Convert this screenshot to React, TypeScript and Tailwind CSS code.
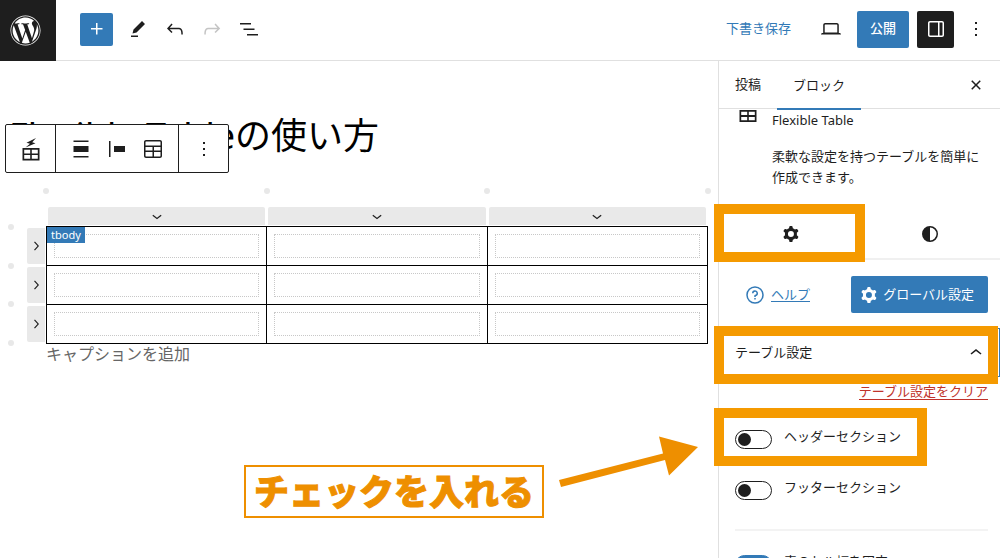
import { useState } from "react";
import type { ReactNode } from "react";
import { FaWordpress } from "react-icons/fa";

const ICONS = {
  plus: "M11 12.5V17.5H12.5V12.5H17.5V11H12.5V6H11V11H6V12.5H11Z",
  edit: "m19 7-3-3-8.5 8.5-1 4 4-1L19 7Zm-7 11.5H5V20h7v-1.5Z",
  undo: "M18.3 11.7c-.6-.6-1.4-.9-2.3-.9H6.7l2.9-3.3-1.1-1-4.5 5L8.5 16l1-1-2.7-2.7H16c.5 0 .9.2 1.3.5 1 1 1 3.4 1 4.5v.3h1.5v-.2c0-1.5 0-4.3-1.5-5.7z",
  redo: "M15.6 6.5l-1.1 1 2.9 3.3H8c-.9 0-1.7.3-2.3.9-1.4 1.5-1.4 4.2-1.4 5.6v.2h1.5v-.3c0-1.1 0-3.5 1-4.5.3-.3.7-.5 1.3-.5h9.2L14.5 15l1.1 1.1 4.6-4.6-4.6-5z",
  list: "M3 6h11v1.5H3V6Zm3.5 5.5h11V13h-11v-1.5ZM21 17H10v1.5h11V17Z",
  desktop: "M20.5 16h-.7V8c0-1.1-.9-2-2-2H6.2c-1.1 0-2 .9-2 2v8h-.7c-.8 0-1.5.7-1.5 1.5h20c0-.8-.7-1.5-1.5-1.5zM5.7 8c0-.3.2-.5.5-.5h11.6c.3 0 .5.2.5.5v7.6H5.7V8z",
  drawer: "M18 4H6c-1.1 0-2 .9-2 2v12c0 1.1.9 2 2 2h12c1.1 0 2-.9 2-2V6c0-1.1-.9-2-2-2zm-4 14.5H6c-.3 0-.5-.2-.5-.5V6c0-.3.2-.5.5-.5h8v13zm4.5-.5c0 .3-.2.5-.5.5h-2.5v-13H18c.3 0 .5.2.5.5v12z",
  more: "M13 19h-2v-2h2v2zm0-6h-2v-2h2v2zm0-6h-2V5h2v2z",
  close: "M12 13.06l3.712 3.713 1.061-1.06L13.061 12l3.712-3.712-1.06-1.06L12 10.938 8.288 7.227l-1.061 1.06L10.939 12l-3.712 3.712 1.06 1.061L12 13.061z",
  cog: "M10.289 4.836A1 1 0 0111.275 4h1.306a1 1 0 01.987.836l.244 1.466c.787.26 1.503.679 2.108 1.218l1.393-.522a1 1 0 011.216.437l.653 1.13a1 1 0 01-.23 1.273l-1.148.944a6.025 6.025 0 010 2.435l1.149.946a1 1 0 01.23 1.272l-.653 1.13a1 1 0 01-1.216.437l-1.394-.522c-.605.54-1.32.958-2.108 1.218l-.244 1.466a1 1 0 01-.987.836h-1.306a1 1 0 01-.986-.836l-.244-1.466a5.995 5.995 0 01-2.108-1.218l-1.394.522a1 1 0 01-1.217-.436l-.653-1.131a1 1 0 01.23-1.272l1.149-.946a6.026 6.026 0 010-2.435l-1.148-.944a1 1 0 01-.23-1.272l.653-1.131a1 1 0 011.217-.437l1.393.522a5.994 5.994 0 012.108-1.218l.244-1.466zM14.929 12a3 3 0 11-6 0 3 3 0 016 0z",
  styles: "M20 12a8 8 0 1 1-16 0 8 8 0 0 1 16 0Zm-1.5 0a6.5 6.5 0 0 1-6.5 6.5v-13a6.5 6.5 0 0 1 6.5 6.5Z",
  help: "M12 4.75a7.25 7.25 0 100 14.5 7.25 7.25 0 000-14.5zM3.25 12a8.75 8.75 0 1117.5 0 8.75 8.75 0 01-17.5 0zM12 8.75a1.5 1.5 0 01.167 2.99c-.465.052-.917.44-.917 1.01V14h1.5v-.845A3 3 0 109 10.25h1.5a1.5 1.5 0 011.5-1.5zM11.25 15v1.5h1.5V15h-1.5z",
  chevronDown: "M17.5 11.6L12 16l-5.5-4.4.9-1.2L12 14l4.5-3.6 1 1.2z",
  chevronUp: "M6.5 12.4L12 8l5.5 4.4-.9 1.2L12 10l-4.5 3.6-1-1.2z",
  chevronRight: "M10.6 6L9.4 7l4.6 5-4.6 5 1.2 1 5.4-6z",
  align: "M4.5 3.5h15V5h-15V3.5ZM4.5 19h15v1.5h-15V19ZM4.5 9h15v6h-15V9Z",
  justifyLeft: "M9 9v6h11V9H9zM4 20h1.5V4H4v16z",
  table: "M19 3H5c-1.1 0-2 .9-2 2v14c0 1.1.9 2 2 2h14c1.1 0 2-.9 2-2V5c0-1.1-.9-2-2-2zM5 4.5h14c.3 0 .5.2.5.5v3.5h-15V5c0-.3.2-.5.5-.5zm8 5.5h6.5v3.5H13V10zm-1.5 3.5h-7V10h7v3.5zm-7 5.5v-4h7v4.5H5c-.3 0-.5-.2-.5-.5zm14.5.5h-6V15h6.5v4c0 .3-.2.5-.5.5z",
  flexTable: "M3.5 11h17v12.500h-17V11ZM5.200 12.700v3.700h6V12.700h-6Zm7.600 0v3.700h6V12.700h-6ZM5.200 18.100v3.700h6v-3.700h-6Zm7.600 0v3.700h6v-3.700h-6ZM17 1 7.500 5.800l3.500 1L6.500 10.500 16.500 6.200l-3.300-1L17 1Z",
  grid: "M3.5 6h17v12h-17V6ZM5.200 7.700v3.400h6V7.700h-6Zm7.600 0v3.400h6V7.700h-6ZM5.200 12.900v3.400h6v-3.400h-6Zm7.600 0v3.400h6v-3.400h-6Z",
};

type IconProps = { name: keyof typeof ICONS; className?: string };

const Icon = ({ name, className = "size-6" }: IconProps) => (
  <svg viewBox="0 0 24 24" className={`shrink-0 ${className}`} fill="currentColor" fillRule="evenodd" aria-hidden="true">
    <path d={ICONS[name]} />
  </svg>
);

const IconButton = ({ name, label, className = "" }: IconProps & { label: string }) => (
  <button type="button" aria-label={label} className={`flex items-center justify-center ${className}`}>
    <Icon name={name} />
  </button>
);

const Highlight = ({ className }: { className: string }) => (
  <span className={`pointer-events-none absolute z-10 border-10 border-[#f59a00] ${className}`} />
);

const Header = () => (
  <header className="flex h-[61px] shrink-0 items-center border-b border-[#e0e0e0]">
    <a href="#" aria-label="投稿一覧" className="flex h-[61px] w-14 items-center bg-[#1e1e1e] pl-[10px] text-white">
      <FaWordpress className="size-[31px]" />
    </a>
    <div className="flex items-center gap-[5px] pb-[2px] pl-6">
      <IconButton name="plus" label="ブロックを追加" className="mr-1 size-[33px] rounded-xs bg-[#337ab7] text-white" />
      <IconButton name="edit" label="ツール" className="size-8" />
      <IconButton name="undo" label="元に戻す" className="size-8" />
      <IconButton name="redo" label="やり直す" className="size-8 text-[#c4c4c4]" />
      <IconButton name="list" label="リスト表示" className="size-8" />
    </div>
    <div className="ml-auto flex items-center gap-2 pb-[2px] pr-[10px]">
      <button type="button" className="mr-[14px] text-[#337ab7]">下書き保存</button>
      <IconButton name="desktop" label="プレビュー" className="size-9" />
      <button type="button" className="h-[37px] rounded-xs bg-[#337ab7] px-[13px] font-medium text-white">公開</button>
      <IconButton name="drawer" label="設定" className="size-[37px] rounded-xs bg-[#1e1e1e] text-white" />
      <IconButton name="more" label="オプション" className="w-7" />
    </div>
  </header>
);

const BlockToolbar = () => (
  <div role="toolbar" aria-label="ブロックツール" className="absolute left-[5px] top-[63px] z-10 flex h-[49px] divide-x divide-[#1e1e1e] rounded-xs border border-[#1e1e1e] bg-white">
    <IconButton name="flexTable" label="Flexible Table" className="w-[50px]" />
    <div className="flex w-[123px] justify-center gap-3">
      <IconButton name="align" label="配置" />
      <IconButton name="justifyLeft" label="セルの配置" />
      <IconButton name="table" label="表を編集" />
    </div>
    <IconButton name="more" label="オプション" className="w-[49px]" />
  </div>
);

const Dots = ({ className }: { className: string }) => (
  <div className={`flex justify-between ${className}`}>
    {[0, 1, 2, 3].map((i) => (
      <button key={i} type="button" aria-label="挿入" className="size-[6px] rounded-full bg-[#e8e8e8]" />
    ))}
  </div>
);

const TableEditor = () => (
  <div className="pt-4">
    <Dots className="ml-[43px] mr-[7px]" />
    <div className="ml-12 mr-3 mt-[13px] flex gap-[3px]">
      {[0, 1, 2].map((i) => (
        <button key={i} type="button" aria-label="列を選択" className="flex h-[18px] flex-1 items-center justify-center rounded-t-xs bg-[#e9e9e9]">
          <Icon name="chevronDown" className="size-5" />
        </button>
      ))}
    </div>
    <div className="mt-px flex pl-2 pr-[10px]">
      <Dots className="-my-[2px] flex-col" />
      <div className="ml-[13px] mr-px flex w-[18px] flex-col gap-[3px] py-[2px]">
        {[0, 1, 2].map((i) => (
          <button key={i} type="button" aria-label="行を選択" className="flex flex-1 items-center justify-center rounded-l-xs bg-[#e9e9e9]">
            <Icon name="chevronRight" className="size-[18px]" />
          </button>
        ))}
      </div>
      <table className="flex-1 table-fixed border-collapse">
        <tbody>
          {[0, 1, 2].map((row) => (
            <tr key={row}>
              {[0, 1, 2].map((col) => (
                <td key={col} className="relative border border-black p-[7px]">
                  {row === 0 && col === 0 && (
                    <span className="absolute left-0 top-0 bg-[#337ab7] px-1 text-[11px] leading-4 text-white">tbody</span>
                  )}
                  <div className="h-6 border border-dotted border-[#c8c8c8]" />
                </td>
              ))}
            </tr>
          ))}
        </tbody>
      </table>
    </div>
    <p className="pl-[46px] text-base leading-5 text-[#666]">キャプションを追加</p>
  </div>
);

const Canvas = () => (
  <main className="relative min-w-0 flex-1">
    <h1 className="pb-[6px] pl-[9px] pt-11 text-4xl leading-[61px] text-black">Flexible Tableの使い方</h1>
    <BlockToolbar />
    <TableEditor />
    <p className="absolute left-[244px] top-[404px] border-2 border-[#ee8f00] bg-white px-2 text-[35px] leading-[49px] font-black text-[#ee8f00] [-webkit-text-stroke:1px_#ee8f00]">
      チェックを入れる
    </p>
    <svg className="absolute left-[556px] top-[371px] h-[60px] w-[146px]" viewBox="0 0 146 60" fill="#ee8f00" aria-hidden="true">
      <path d="M3 48 107 21.500 103 4.500 142 15 113 43.500 109 28 5 55Z" />
    </svg>
  </main>
);

type ToggleProps = { label: string; initial?: boolean; children?: ReactNode };

const Toggle = ({ label, initial = false, children }: ToggleProps) => {
  const [checked, setChecked] = useState(initial);
  return (
    <label className="relative flex items-start gap-3">
      <span className="relative mt-1 h-[19px] w-[37px]">
        <input
          type="checkbox"
          checked={checked}
          onChange={() => setChecked(!checked)}
          className="peer block h-full w-full appearance-none rounded-full border border-[#1e1e1e] bg-white checked:border-[#337ab7] checked:bg-[#337ab7]"
        />
        <span className="pointer-events-none absolute left-[3px] top-[3px] size-[13px] rounded-full bg-[#1e1e1e] peer-checked:left-[21px] peer-checked:bg-white" />
      </span>
      <span className="leading-5">{label}</span>
      {children}
    </label>
  );
};

const Sidebar = () => (
  <aside className="w-[282px] shrink-0 border-l border-[#e0e0e0]">
    <div className="flex h-12 items-stretch border-b border-[#e0e0e0] pr-3">
      <button type="button" className="px-4">投稿</button>
      <button type="button" className="-mb-[2px] border-b-2 border-[#337ab7] px-4 pt-[2px]">ブロック</button>
      <IconButton name="close" label="設定を閉じる" className="ml-auto" />
    </div>

    <div className="flex gap-3 pl-[17px] pr-3 pt-px">
      <Icon name="grid" className="-mt-[6px] size-6" />
      <div>
        <h2 className="leading-5">Flexible Table</h2>
        <p className="mt-4 leading-[21px]">柔軟な設定を持つテーブルを簡単に作成できます。</p>
      </div>
    </div>

    <div className="mt-[22px] flex h-[50px] border-b-2 border-[#f0f0f0] pl-[2px]">
      <div className="relative flex flex-1">
        <IconButton name="cog" label="設定" className="flex-1" />
        <Highlight className="-left-[7px] -right-1 -bottom-[4px] -top-[6px]" />
      </div>
      <IconButton name="styles" label="スタイル" className="flex-1" />
    </div>

    <div className="mt-4 flex items-center justify-between pl-6 pr-3">
      <a href="#" className="flex items-center gap-1 text-[#337ab7]">
        <Icon name="help" />
        <span className="border-b border-[#337ab7] leading-[13px]">ヘルプ</span>
      </a>
      <button type="button" className="flex h-[37px] items-center gap-[2px] rounded-xs bg-[#337ab7] pl-[10px] pr-[14px] text-white">
        <Icon name="cog" className="-ml-1 size-6" />
        グローバル設定
      </button>
    </div>

    <section className="mt-[15px]">
      <h2 className="relative">
        <button type="button" aria-expanded="true" className="flex h-[49px] w-full items-center justify-between border border-[#337ab7] pl-[15px] pr-[11px]">
          テーブル設定
          <Icon name="chevronUp" />
        </button>
        <Highlight className="-left-[5px] right-[2px] -bottom-[7px] -top-[2px]" />
      </h2>
      <div className="pl-4 pr-3 pt-[7px]">
        <div className="flex justify-end">
          <button type="button" className="border-b border-[#c0332b] leading-[15px] text-[#c0332b]">テーブル設定をクリア</button>
        </div>
        <div className="mt-[26px] flex flex-col items-start gap-7 border-b-2 border-[#f3f3f3] pb-[29px]">
          <Toggle label="ヘッダーセクション">
            <Highlight className="-left-[21px] -right-[26px] -top-[18px] -bottom-[17px]" />
          </Toggle>
          <Toggle label="フッターセクション" />
        </div>
        <div className="mt-5">
          <Toggle label="表のセル幅を固定" initial />
        </div>
      </div>
    </section>
  </aside>
);

const App = () => (
  <div className="flex h-screen flex-col overflow-hidden bg-white font-['Noto_Sans','Noto_Sans_CJK_JP',sans-serif] text-[13px] text-[#1e1e1e]">
    <Header />
    <div className="flex min-h-0 flex-1">
      <Canvas />
      <Sidebar />
    </div>
  </div>
);

export default App;
